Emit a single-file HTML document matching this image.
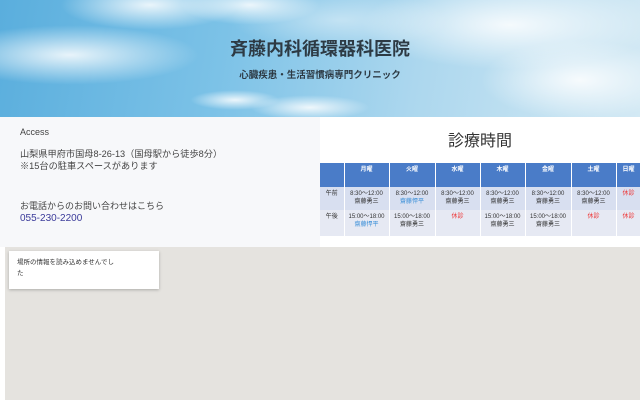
<!DOCTYPE html>
<html><head><meta charset="utf-8"><style>
*{margin:0;padding:0;box-sizing:border-box}
body{width:640px;height:400px;overflow:hidden;font-family:"Liberation Sans","Noto Sans CJK JP",sans-serif;background:#fff;position:relative}
.hd{position:absolute;left:0;top:0;width:640px;height:117px;overflow:hidden;
background:linear-gradient(100deg,#5aaedd 0%,#7cc2e7 35%,#acd7ee 65%,#d3e9f4 100%)}
.c{position:absolute;border-radius:50%;background:radial-gradient(ellipse at center,rgba(255,255,255,.85),rgba(255,255,255,0) 70%)}
.t1{position:absolute;top:35px;left:0;width:640px;text-align:center;font-size:18px;font-weight:bold;color:#2d3a44}
.t2{position:absolute;top:67px;left:0;width:640px;text-align:center;font-size:9.5px;font-weight:bold;color:#2d3a44}
.lp{position:absolute;left:0;top:117px;width:320px;height:130px;background:#f7f8fa;color:#444}
.rp{position:absolute;left:320px;top:117px;width:320px;height:130px;background:#fff}
.map{position:absolute;left:5px;top:247px;width:635px;height:153px;background:#e5e3df}
.card{position:absolute;left:9px;top:251px;width:150px;height:38px;background:#fff;box-shadow:0 1px 3px rgba(0,0,0,.25);font-size:6.5px;color:#333;padding:6px 8px;line-height:11px}
table{position:absolute;left:320px;top:163px;border-collapse:collapse;table-layout:fixed;width:335px}
td{font-size:6px;text-align:center;color:#333;line-height:8px;border-right:1px solid #fff;vertical-align:top;padding-top:3px}
tr.h td{background:#4a7cc8;color:#fff;height:24px;font-weight:bold;padding-top:3px}
tr.r1 td{background:#d8dff0;height:23px}
tr.r2 td{background:#e6e9f3;height:26px}
.b{color:#3a8fd8}.r{color:#e33}
</style></head><body>
<div class="hd">
<div class="c" style="left:-60px;top:25px;width:260px;height:60px"></div>
<div class="c" style="left:60px;top:-20px;width:180px;height:50px"></div>
<div class="c" style="left:180px;top:-15px;width:140px;height:40px"></div>
<div class="c" style="left:190px;top:90px;width:90px;height:20px"></div>
<div class="c" style="left:250px;top:95px;width:120px;height:25px"></div>
<div class="c" style="left:360px;top:-20px;width:300px;height:90px"></div>
<div class="c" style="left:480px;top:40px;width:200px;height:80px"></div>
<div class="c" style="left:230px;top:-10px;width:220px;height:60px;opacity:.5"></div>
<div class="t1">斉藤内科循環器科医院</div>
<div class="t2">心臓疾患・生活習慣病専門クリニック</div>
</div>
<div class="lp">
<div style="position:absolute;left:20px;top:10px;font-size:9px">Access</div>
<div style="position:absolute;left:20px;top:31px;font-size:9.2px;line-height:12px">山梨県甲府市国母8-26-13（国母駅から徒歩8分）<br>※15台の駐車スペースがあります</div>
<div style="position:absolute;left:20px;top:82px;font-size:9px">お電話からのお問い合わせはこちら</div>
<div style="position:absolute;left:20px;top:96px;font-size:10px;color:#3b3b9a">055-230-2200</div>
</div>
<div class="rp"><div style="position:absolute;left:0;width:320px;top:10px;text-align:center;font-size:16px;color:#333">診療時間</div></div>
<table>
<colgroup><col style="width:24px"><col style="width:45px"><col style="width:46px"><col style="width:45px"><col style="width:45px"><col style="width:46px"><col style="width:45px"><col style="width:39px"></colgroup>
<tr class="h"><td></td><td>月曜</td><td>火曜</td><td>水曜</td><td>木曜</td><td>金曜</td><td>土曜</td><td style="text-align:left;padding-left:6px">日曜</td></tr>
<tr class="r1"><td>午前</td><td>8:30～12:00<br>齋藤勇三</td><td>8:30～12:00<br><span class="b">齋藤悍平</span></td><td>8:30～12:00<br>齋藤勇三</td><td>8:30～12:00<br>齋藤勇三</td><td>8:30～12:00<br>齋藤勇三</td><td>8:30～12:00<br>齋藤勇三</td><td class="r" style="text-align:left;padding-left:6px">休診</td></tr>
<tr class="r2"><td>午後</td><td>15:00～18:00<br><span class="b">齋藤悍平</span></td><td>15:00～18:00<br>齋藤勇三</td><td class="r">休診</td><td>15:00～18:00<br>齋藤勇三</td><td>15:00～18:00<br>齋藤勇三</td><td class="r">休診</td><td class="r" style="text-align:left;padding-left:6px">休診</td></tr>
</table>
<div class="map"></div>
<div class="card">場所の情報を読み込めませんでし<br>た</div>
</body></html>
